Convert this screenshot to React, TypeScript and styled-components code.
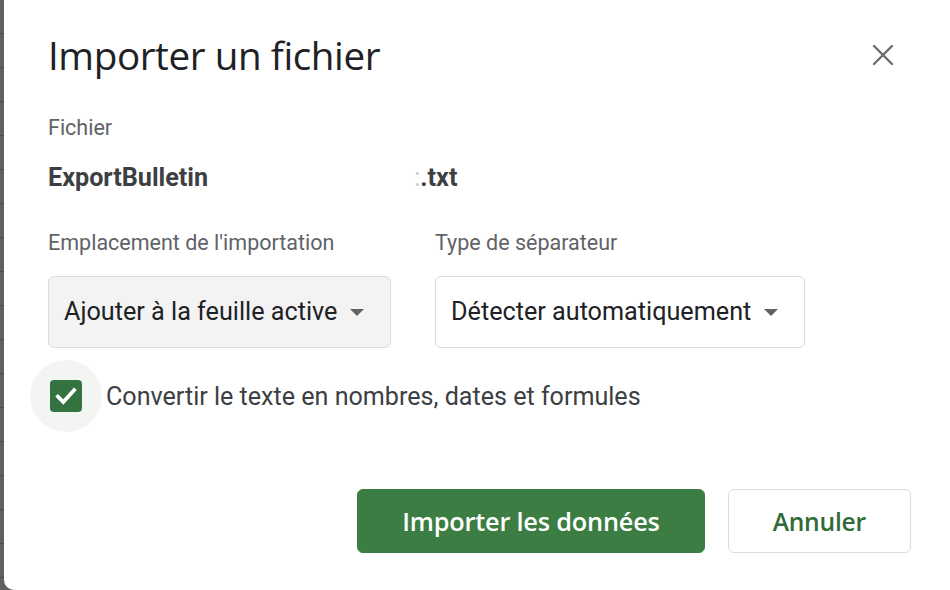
import React from 'react'
import styled, { createGlobalStyle } from 'styled-components'

const GlobalStyle = createGlobalStyle`
  html, body {
    margin: 0;
    padding: 0;
    background: #ffffff;
    overflow: hidden;
  }
  #root {
    width: 950px;
    height: 590px;
  }
`

// sheet behind the dialog, only a thin slice shows at the left
const Page = styled.div`
  display: flex;
  width: 950px;
  height: 590px;
  background: #5f5f5f;
`

const SheetEdge = styled.div`
  width: 4px;
  flex-shrink: 0;
  background: repeating-linear-gradient(
    to bottom,
    #606060 0px,
    #606060 33px,
    #4e4e4e 33px,
    #4e4e4e 34px
  );
`

const Dialog = styled.div`
  flex: 1;
  display: flex;
  flex-direction: column;
  background: #ffffff;
  border-bottom-left-radius: 10px;
  padding: 25px 45px 0 44px;
  font-family: Roboto, 'Liberation Sans', sans-serif;
  color: #202124;
`

const Header = styled.div`
  display: flex;
  align-items: center;
  justify-content: space-between;
  height: 60px;
`

const Title = styled.h1`
  margin: 0;
  font-family: 'Open Sans', Roboto, sans-serif;
  font-weight: 400;
  font-size: 38.6px;
  letter-spacing: -0.4px;
  color: #202124;
`

const CloseButton = styled.button`
  width: 44px;
  height: 44px;
  padding: 0;
  border: none;
  background: transparent;
  display: flex;
  align-items: center;
  justify-content: center;
  cursor: pointer;
`

const Label = styled.div`
  font-size: 21.5px;
  line-height: 28px;
  color: #5f6368;
`

const FileLabel = styled(Label)`
  margin-top: 29px;
`

const FileName = styled.div`
  margin-top: 21px;
  display: flex;
  align-items: center;
  font-size: 25.2px;
  line-height: 30px;
  font-weight: 700;
  color: #3c4043;
  white-space: nowrap;
`

const Redacted = styled.span`
  display: inline-block;
  width: 206px;
`

const Fragment = styled.span`
  color: #c8c9cb;
  font-weight: 400;
`

const Fields = styled.div`
  display: flex;
  gap: 44px;
  margin-top: 36px;
`

const Field = styled.div`
  display: flex;
  flex-direction: column;
  gap: 19px;
`

const Select = styled.div<{ $filled?: boolean }>`
  display: flex;
  align-items: center;
  gap: 13px;
  height: 72px;
  box-sizing: border-box;
  padding: 0 0 2px 15px;
  border: 1px solid #dadce0;
  border-radius: 6px;
  background: ${(p) => (p.$filled ? '#f3f3f3' : '#ffffff')};
  font-size: 25.2px;
  color: #202124;
  white-space: nowrap;
`

const Caret = styled.span`
  flex-shrink: 0;
  width: 0;
  height: 0;
  border-left: 7px solid transparent;
  border-right: 7px solid transparent;
  border-top: 7px solid #5f6368;
  margin-top: 3px;
`

const CheckRow = styled.label`
  display: flex;
  align-items: center;
  gap: 4px;
  margin: 12px 0 0 -18px;
  font-size: 25.1px;
  color: #3c4043;
  white-space: nowrap;
`

const Halo = styled.span`
  width: 72px;
  height: 72px;
  border-radius: 50%;
  background: #f3f5f3;
  display: flex;
  align-items: center;
  justify-content: center;
`

const Box = styled.span`
  width: 32px;
  height: 32px;
  border-radius: 4px;
  background: #34733f;
  display: flex;
  align-items: center;
  justify-content: center;
`

const Footer = styled.div`
  display: flex;
  justify-content: flex-end;
  gap: 23px;
  margin-top: 57px;
  margin-right: -6px;
`

const Button = styled.button<{ $primary?: boolean }>`
  height: 64px;
  box-sizing: border-box;
  padding: 0 44px;
  border-radius: 6px;
  border: 1px solid ${(p) => (p.$primary ? '#3b7d42' : '#dadce0')};
  background: ${(p) => (p.$primary ? '#3b7d42' : '#ffffff')};
  color: ${(p) => (p.$primary ? '#ffffff' : '#2f6b38')};
  font-family: 'Open Sans', Roboto, sans-serif;
  font-weight: 600;
  font-size: ${(p) => (p.$primary ? '25.3px' : '24.6px')};
  letter-spacing: -0.2px;
  cursor: pointer;
`

export default function App() {
  return (
    <>
      <GlobalStyle />
      <Page>
        <SheetEdge />
        <Dialog>
          <Header>
            <Title>Importer un fichier</Title>
            <CloseButton aria-label="Fermer">
              <svg width="22" height="22" viewBox="0 0 22 22">
                <path d="M2 2 L20 20 M20 2 L2 20" stroke="#6b6e72" strokeWidth="2.4" strokeLinecap="round" />
              </svg>
            </CloseButton>
          </Header>

          <FileLabel>Fichier</FileLabel>
          <FileName>
            ExportBulletin
            <Redacted />
            <Fragment>:</Fragment>.txt
          </FileName>

          <Fields>
            <Field>
              <Label>Emplacement de l'importation</Label>
              <Select $filled style={{ width: 343 }}>
                Ajouter à la feuille active
                <Caret />
              </Select>
            </Field>
            <Field>
              <Label>Type de séparateur</Label>
              <Select style={{ width: 370 }}>
                Détecter automatiquement
                <Caret />
              </Select>
            </Field>
          </Fields>

          <CheckRow>
            <Halo>
              <Box>
                <svg width="26" height="26" viewBox="0 0 24 24">
                  <path d="M4.5 12.5 L9.5 17.5 L19.5 6.5" fill="none" stroke="#ffffff" strokeWidth="3.4" strokeLinecap="square" />
                </svg>
              </Box>
            </Halo>
            Convertir le texte en nombres, dates et formules
          </CheckRow>

          <Footer>
            <Button $primary>Importer les données</Button>
            <Button>Annuler</Button>
          </Footer>
        </Dialog>
      </Page>
    </>
  )
}
